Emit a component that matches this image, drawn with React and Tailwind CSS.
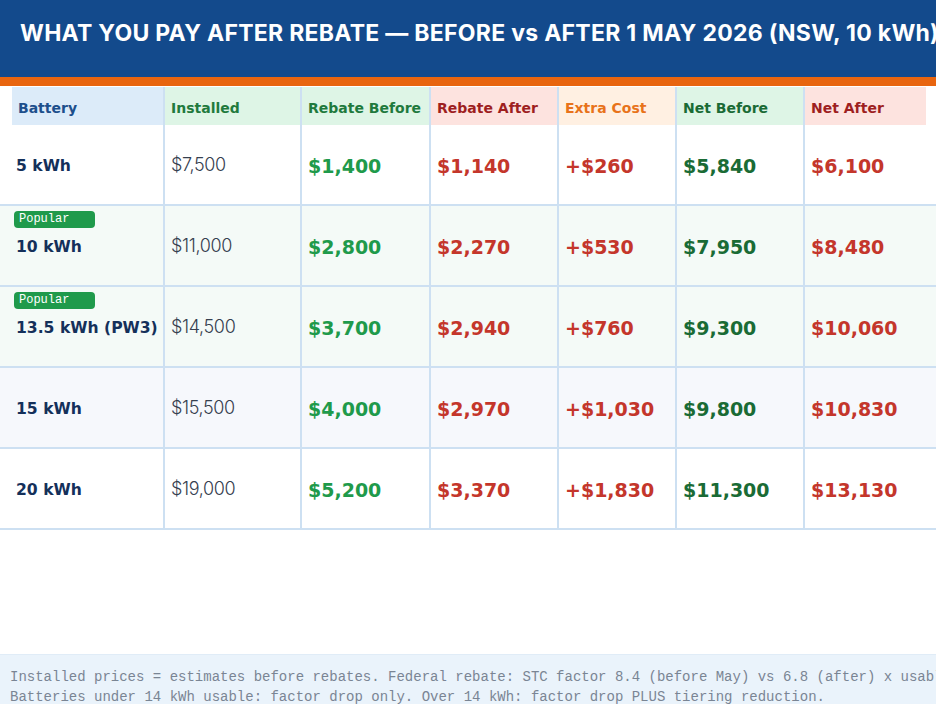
import React from "react";

const cols = "grid grid-cols-[165px_137px_129px_128px_118px_128px_131px]";

const headers = [
  { t: "Battery", bg: "bg-[#dcebf9]", c: "text-[#1d4f8c]" },
  { t: "Installed", bg: "bg-[#def5e6]", c: "text-[#1f7a3d]" },
  { t: "Rebate Before", bg: "bg-[#def5e6]", c: "text-[#1f7a3d]" },
  { t: "Rebate After", bg: "bg-[#fde3df]", c: "text-[#9e1f1f]" },
  { t: "Extra Cost", bg: "bg-[#fff0e2]", c: "text-[#e8731a]" },
  { t: "Net Before", bg: "bg-[#def5e6]", c: "text-[#1a6b35]" },
  { t: "Net After", bg: "bg-[#fde3df]", c: "text-[#9e1f1f]" },
];

const rows = [
  { b: "5 kWh", i: "$7,500", rb: "$1,400", ra: "$1,140", x: "+$260", nb: "$5,840", na: "$6,100", bg: "bg-white" },
  { b: "10 kWh", pop: true, i: "$11,000", rb: "$2,800", ra: "$2,270", x: "+$530", nb: "$7,950", na: "$8,480", bg: "bg-[#f4faf7]" },
  { b: "13.5 kWh (PW3)", pop: true, i: "$14,500", rb: "$3,700", ra: "$2,940", x: "+$760", nb: "$9,300", na: "$10,060", bg: "bg-[#f4faf7]" },
  { b: "15 kWh", i: "$15,500", rb: "$4,000", ra: "$2,970", x: "+$1,030", nb: "$9,800", na: "$10,830", bg: "bg-[#f6f8fc]" },
  { b: "20 kWh", i: "$19,000", rb: "$5,200", ra: "$3,370", x: "+$1,830", nb: "$11,300", na: "$13,130", bg: "bg-white" },
];

const dv = { fontFamily: '"DejaVu Sans", sans-serif' };
const inter = { fontFamily: 'Inter, "Liberation Sans", sans-serif' };
const mono = { fontFamily: '"Liberation Mono", "DejaVu Sans Mono", monospace' };

function Cell({ children, last, className = "" }) {
  return (
    <div
      className={`flex items-center pl-[6px] h-[81px] border-b-2 border-[#cde0f2] ${last ? "" : "border-r-2"} ${className}`}
    >
      {children}
    </div>
  );
}

function Val({ v, color }) {
  return (
    <span style={dv} className={`font-bold text-[19px] leading-none mt-[4px] ${color}`}>
      {v}
    </span>
  );
}

export default function App() {
  return (
    <div className="w-[936px] h-[704px] overflow-hidden bg-white flex flex-col">
      <div className="h-[86px] shrink-0 bg-[#134a8c] border-b-[9px] border-[#e8650f] pl-5 pt-[19px] overflow-hidden">
        <div style={inter} className="text-white font-bold text-[23px] leading-7 whitespace-nowrap tracking-[0.012em]">
          WHAT YOU PAY AFTER REBATE — BEFORE vs AFTER 1 MAY 2026 (NSW, 10 kWh)
        </div>
      </div>
      <div className={`${cols} mt-px h-[38px]`}>
        {headers.map((h, idx) => (
          <div
            key={h.t}
            className={`h-[38px] ${idx === 0 ? "pl-3" : ""} ${idx === 6 ? "pr-[10px]" : "border-r-2 border-[#cde0f2]"}`}
          >
            <div className={`h-full flex items-center pl-[6px] pt-[4px] ${h.bg}`}>
              <span style={dv} className={`font-bold text-[14px] leading-none ${h.c}`}>
                {h.t}
              </span>
            </div>
          </div>
        ))}
      </div>
      {rows.map((r) => (
        <div key={r.b} className={`${cols} ${r.bg}`}>
          <Cell className="pl-[16px]">
            <div className="relative mt-[1px]">
              {r.pop && (
                <div
                  style={mono}
                  className="absolute left-[-2px] bottom-full mb-[6px] w-[81px] h-[17px] rounded-[4px] bg-[#1f9a4b] text-white text-[12px] leading-[17px] pl-[5px]"
                >
                  Popular
                </div>
              )}
              <span style={dv} className="font-bold text-[15.6px] leading-none text-[#14305a] whitespace-nowrap">
                {r.b}
              </span>
            </div>
          </Cell>
          <Cell>
            <span style={inter} className="font-light text-[18px] leading-none text-[#36404f] tracking-[-0.02em]">
              {r.i}
            </span>
          </Cell>
          <Cell>
            <Val v={r.rb} color="text-[#1f9a4b]" />
          </Cell>
          <Cell>
            <Val v={r.ra} color="text-[#c4362b]" />
          </Cell>
          <Cell>
            <Val v={r.x} color="text-[#c4362b]" />
          </Cell>
          <Cell>
            <Val v={r.nb} color="text-[#1a6b35]" />
          </Cell>
          <Cell last>
            <Val v={r.na} color="text-[#c4362b]" />
          </Cell>
        </div>
      ))}
      <div className="flex-1" />
      <div className="h-[50px] shrink-0 bg-[#eaf3fb] border-t border-[#e0ecf7] pl-[10px] pt-[12px] overflow-hidden">
        <div style={mono} className="text-[14px] leading-5 text-[#7a8594] whitespace-nowrap">
          Installed prices = estimates before rebates. Federal rebate: STC factor 8.4 (before May) vs 6.8 (after) x usable kWh.
        </div>
        <div style={mono} className="text-[14px] leading-5 text-[#7a8594] whitespace-nowrap">
          Batteries under 14 kWh usable: factor drop only. Over 14 kWh: factor drop PLUS tiering reduction.
        </div>
      </div>
    </div>
  );
}
